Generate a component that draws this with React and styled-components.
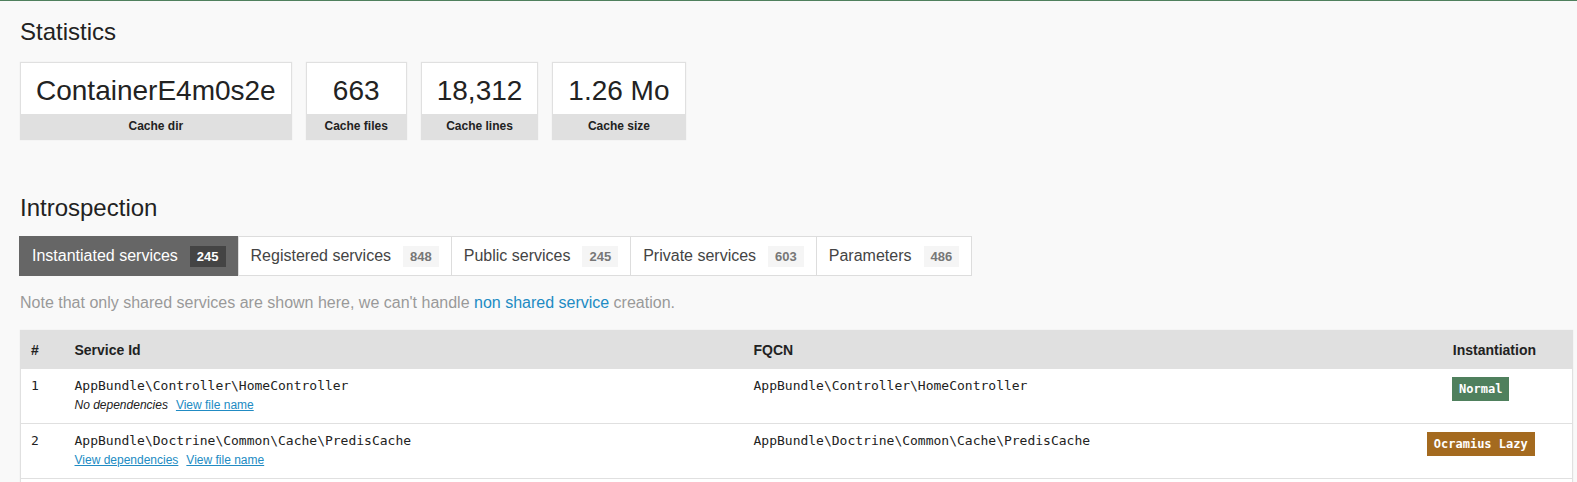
import React from "react";
import styled, { createGlobalStyle } from "styled-components";

const Global = createGlobalStyle`
  html, body { margin: 0; padding: 0; }
  body {
    background: #f9f9f9;
    color: #222;
    font-family: "Liberation Sans", Arial, sans-serif;
    font-size: 14px;
    border-top: 1px solid #4f805d;
  }
`;

const Page = styled.div`
  padding: 0 4px 0 20px;
`;

const Heading = styled.h2`
  margin: ${(p) => p.$top}px 0 ${(p) => p.$bottom}px;
  font-size: 24px;
  line-height: 28px;
  font-weight: normal;
  color: #222;
`;

const Metrics = styled.div`
  display: flex;
  gap: 14px;
  align-items: flex-start;
`;

const Metric = styled.div`
  background: #fff;
  border: 1px solid #e0e0e0;
  box-shadow: 0 0 1px rgba(128, 128, 128, 0.2);
  min-width: 99px;
  text-align: center;
`;

const MetricValue = styled.span`
  display: block;
  font-size: 28px;
  line-height: 39px;
  padding: 8px 15px 4px;
  color: #222;
`;

const MetricLabel = styled.span`
  display: block;
  background: #e0e0e0;
  font-size: 12px;
  line-height: 17px;
  font-weight: bold;
  padding: 4px;
  color: #222;
`;

const Tabs = styled.ul`
  display: flex;
  list-style: none;
  margin: 0 0 17px -1px;
  padding: 0;
`;

const Tab = styled.li`
  display: flex;
  align-items: center;
  height: 38px;
  padding: 0 12px;
  margin-left: -1px;
  font-size: 16px;
  border: 1px solid ${(p) => (p.$active ? "#666" : "#ddd")};
  background: ${(p) => (p.$active ? "#666" : "#fff")};
  color: ${(p) => (p.$active ? "#fff" : "#444")};
  &:first-child { margin-left: 0; }
`;

const TabBadge = styled.span`
  margin-left: 12px;
  padding: 2px 7px;
  line-height: 17px;
  font-size: 13px;
  font-weight: bold;
  background: ${(p) => (p.$active ? "#444" : "#f5f5f5")};
  color: ${(p) => (p.$active ? "#fff" : "#777")};
`;

const Note = styled.p`
  margin: 0 0 17px;
  font-size: 16px;
  line-height: 20px;
  color: #999;
`;

const Link = styled.a`
  color: #218bc3;
  text-decoration: ${(p) => (p.$underline ? "underline" : "none")};
  cursor: pointer;
`;

const Table = styled.table`
  width: 100%;
  table-layout: fixed;
  border-collapse: collapse;
  border: 1px solid #e0e0e0;
  background: #fff;
  box-shadow: 0 0 1px rgba(128, 128, 128, 0.2);
`;

const Th = styled.th`
  background: #e0e0e0;
  font-size: 14px;
  line-height: 18px;
  font-weight: bold;
  padding: ${(p) => (p.$last ? "10px 36px 10px 10px" : "10px")};
  text-align: ${(p) => (p.$last ? "right" : "left")};
  color: #222;
  white-space: nowrap;
`;

const Td = styled.td`
  vertical-align: top;
  padding: ${(p) => (p.$last ? "8px 37px 9px 10px" : "8px 10px 9px")};
  border-bottom: 1px solid #e0e0e0;
  text-align: ${(p) => (p.$last ? "center" : "left")};
  font-family: "DejaVu Sans Mono", monospace;
  font-size: 13px;
  line-height: 18px;
  color: #222;
`;

const Mono = styled.div`
  font-family: "DejaVu Sans Mono", monospace;
  font-size: 13px;
  line-height: 18px;
`;

const Meta = styled.div`
  display: flex;
  gap: 8px;
  margin-top: 2px;
  font-family: "Liberation Sans", Arial, sans-serif;
  font-size: 12px;
  line-height: 17px;
`;

const Muted = styled.em`
  font-style: italic;
  color: #222;
`;

const Badge = styled.span`
  display: inline-block;
  white-space: nowrap;
  padding: 4px 7px;
  line-height: 16px;
  font-family: "DejaVu Sans Mono", monospace;
  font-size: 12px;
  font-weight: bold;
  color: #fff;
  background: ${(p) => (p.$kind === "lazy" ? "#a46a1f" : "#4f805d")};
`;

const metrics = [
  ["ContainerE4m0s2e", "Cache dir"],
  ["663", "Cache files"],
  ["18,312", "Cache lines"],
  ["1.26 Mo", "Cache size"],
];

const tabs = [
  ["Instantiated services", "245", true],
  ["Registered services", "848"],
  ["Public services", "245"],
  ["Private services", "603"],
  ["Parameters", "486"],
];

const rows = [
  {
    n: 1,
    id: "AppBundle\\Controller\\HomeController",
    deps: false,
    kind: "normal",
    label: "Normal",
  },
  {
    n: 2,
    id: "AppBundle\\Doctrine\\Common\\Cache\\PredisCache",
    deps: true,
    kind: "lazy",
    label: "Ocramius Lazy",
  },
];

export default function App() {
  return (
    <Page>
      <Global />
      <Heading $top={17} $bottom={16}>Statistics</Heading>
      <Metrics>
        {metrics.map(([v, l]) => (
          <Metric key={l}>
            <MetricValue>{v}</MetricValue>
            <MetricLabel>{l}</MetricLabel>
          </Metric>
        ))}
      </Metrics>
      <Heading $top={54} $bottom={14}>Introspection</Heading>
      <Tabs>
        {tabs.map(([t, c, a]) => (
          <Tab key={t} $active={a}>
            {t}
            <TabBadge $active={a}>{c}</TabBadge>
          </Tab>
        ))}
      </Tabs>
      <Note>
        Note that only shared services are shown here, we can't handle{" "}
        <Link>non shared service</Link> creation.
      </Note>
      <Table>
        <colgroup>
          <col style={{ width: 44 }} />
          <col style={{ width: 679 }} />
          <col style={{ width: 673 }} />
          <col />
        </colgroup>
        <thead>
          <tr>
            <Th>#</Th>
            <Th>Service Id</Th>
            <Th>FQCN</Th>
            <Th $last>Instantiation</Th>
          </tr>
        </thead>
        <tbody>
          {rows.map((r) => (
            <tr key={r.n}>
              <Td>{r.n}</Td>
              <Td>
                <Mono>{r.id}</Mono>
                <Meta>
                  {r.deps ? (
                    <Link $underline>View dependencies</Link>
                  ) : (
                    <Muted>No dependencies</Muted>
                  )}
                  <Link $underline>View file name</Link>
                </Meta>
              </Td>
              <Td>{r.id}</Td>
              <Td $last>
                <Badge $kind={r.kind}>{r.label}</Badge>
              </Td>
            </tr>
          ))}
          <tr>
            <Td>3</Td>
            <Td>
              <Mono>AppBundle\Twig\AppExtension</Mono>
            </Td>
            <Td>AppBundle\Twig\AppExtension</Td>
            <Td $last>
              <Badge>Normal</Badge>
            </Td>
          </tr>
        </tbody>
      </Table>
    </Page>
  );
}
